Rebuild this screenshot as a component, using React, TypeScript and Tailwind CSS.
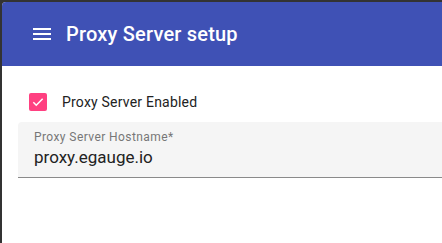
import React from "react";

export default function App() {
  return (
    <div className="w-[442px] h-[243px] bg-[#333333] pl-[2px] pt-[2px] overflow-hidden" style={{ fontFamily: "Roboto, 'Liberation Sans', sans-serif" }}>
      <div className="w-full h-full bg-white rounded-tl-[4px] overflow-hidden flex flex-col">
        <div className="h-[64px] bg-[#3f51b5] flex items-center shrink-0">
          <svg width="24" height="24" viewBox="0 0 24 24" className="ml-[28px] shrink-0">
            <rect x="3" y="6" width="18" height="2" fill="white" />
            <rect x="3" y="11" width="18" height="2" fill="white" />
            <rect x="3" y="16" width="18" height="2" fill="white" />
          </svg>
          <div className="ml-[12px] text-white text-[20px] font-medium tracking-[0.01em]">Proxy Server setup</div>
        </div>
        <div className="flex items-center h-[18px] mt-[27px] ml-[27px]">
          <div className="w-[18px] h-[18px] rounded-[2px] bg-[#ff4081] flex items-center justify-center">
            <svg width="14" height="14" viewBox="0 0 24 24">
              <path d="M4 12.5l5 5L20 6.5" fill="none" stroke="white" strokeWidth="2.6" />
            </svg>
          </div>
          <div className="ml-[15px] text-[14px] text-[#222] tracking-[0.015em]">Proxy Server Enabled</div>
        </div>
        <div className="ml-[16px] mt-[11px] h-[56px] bg-[#f5f5f5] rounded-tl-[4px] border-b border-[#8a8a8a] pl-[16px] pt-[7px]">
          <div className="text-[12px] leading-[16px] text-[#777] tracking-[0.035em]">Proxy Server Hostname*</div>
          <div className="text-[17px] leading-[22px] text-[#222] mt-[1px]">proxy.egauge.io</div>
        </div>
      </div>
    </div>
  );
}
